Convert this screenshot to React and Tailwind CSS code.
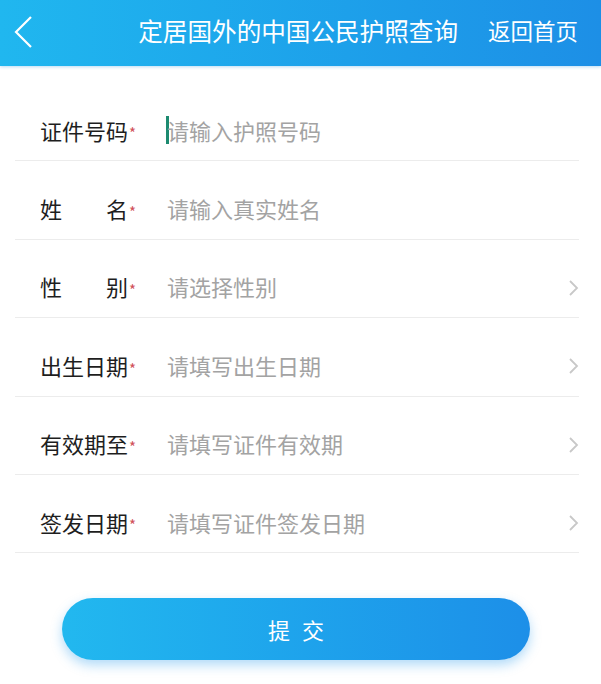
const fields = [
  { label: ["证件号码"], placeholder: "请输入护照号码", cursor: true },
  { label: ["姓", "名"], placeholder: "请输入真实姓名" },
  { label: ["性", "别"], placeholder: "请选择性别", arrow: true },
  { label: ["出生日期"], placeholder: "请填写出生日期", arrow: true },
  { label: ["有效期至"], placeholder: "请填写证件有效期", arrow: true },
  { label: ["签发日期"], placeholder: "请填写证件签发日期", arrow: true },
];

const FieldRow = ({ field }) => (
  <div className="h-[78.4px] pt-[17px] flex items-center border-b border-[#ececec] ml-[15px] mr-[22px]">
    <div className="flex items-center pl-[25px] w-[152px]">
      <div className="w-[88px] flex justify-between text-[22px] text-[#1e1e1e]">
        {field.label.map((part) => (
          <span key={part}>{part}</span>
        ))}
      </div>
      <span className="text-[15px] text-[#d0505a] mt-[7px] ml-[1px]">*</span>
    </div>
    <div className="flex-1 flex items-center text-[22px] text-[#a3a3a3]">
      {field.cursor && <span className="w-[3px] h-[28px] bg-[#1c8a70] -ml-[1px] mr-[-2px]" />}
      <span>{field.placeholder}</span>
    </div>
    {field.arrow && (
      <svg width="14" height="18" viewBox="0 0 14 18" className="mr-[-2px] mt-[2px]">
        <polyline points="3,2 10,9 3,16" fill="none" stroke="#c8c8c8" strokeWidth="1.8" />
      </svg>
    )}
  </div>
);

const App = () => {
  return (
    <div
      className="w-[601px] h-[684px] bg-white overflow-hidden"
      style={{ fontFamily: '"Noto Sans CJK SC", "Noto Sans", sans-serif' }}
    >
      <div className="h-[66px] pb-[6px] flex items-center bg-gradient-to-r from-[#20b7ef] to-[#1d8fe6] text-white shadow-[0_1px_3px_rgba(30,140,220,0.3)]">
        <svg width="40" height="40" viewBox="0 0 40 40" className="ml-[6px] mt-[4px]">
          <polyline points="25,5 10,20 25,35" fill="none" stroke="white" strokeWidth="2.2" />
        </svg>
        <div className="flex-1 text-right text-[24.6px] leading-none pr-[30px]">定居国外的中国公民护照查询</div>
        <div className="text-[22.5px] leading-none pr-[23px]">返回首页</div>
      </div>

      <div className="pt-[17px]">
        {fields.map((field) => (
          <FieldRow key={field.placeholder} field={field} />
        ))}
      </div>

      <div className="pt-[45px] pl-[62px]">
        <button className="w-[468px] h-[62px] rounded-full bg-gradient-to-r from-[#22b8ef] to-[#1d8fe8] text-white text-[22px] tracking-[12px] pl-[12px] shadow-[0_5px_12px_rgba(30,150,235,0.35)]">
          提交
        </button>
      </div>
    </div>
  );
};

export default App;
